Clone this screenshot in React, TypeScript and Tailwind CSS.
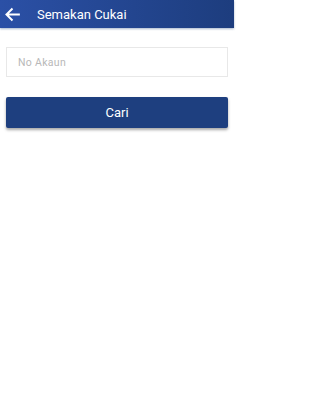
import React from 'react';

export default function App() {
  return (
    <div className="w-[234px] h-[400px] bg-white flex flex-col" style={{ fontFamily: 'Roboto, "Liberation Sans", sans-serif' }}>
      <header className="h-[28px] flex items-center bg-gradient-to-r from-[#2b50a6] to-[#1d3d7e] shadow-[0_1px_2px_rgba(60,90,140,0.45)]">
        <svg className="ml-[4px] w-[17px] h-[17px]" viewBox="0 0 24 24" fill="none" stroke="white" strokeWidth="2.8" strokeLinecap="square">
          <path d="M21 12H4M11 4.5L3.5 12L11 19.5" />
        </svg>
        <span className="ml-[16px] text-white text-[13px] leading-none">Semakan Cukai</span>
      </header>
      <div className="px-[6px] pt-[19px] flex flex-col gap-[20px]">
        <div className="h-[30px] border border-[#e8e8e8] bg-white flex items-center px-[11px] pt-[2px]">
          <span className="text-[#b8b8b8] text-[10.5px] tracking-[0.03em]">No Akaun</span>
        </div>
        <button className="h-[31px] w-full bg-[#1e3f7f] text-white text-[13px] rounded-[2px] shadow-[0_2px_3px_rgba(0,0,0,0.35)]">
          Cari
        </button>
      </div>
    </div>
  );
}
